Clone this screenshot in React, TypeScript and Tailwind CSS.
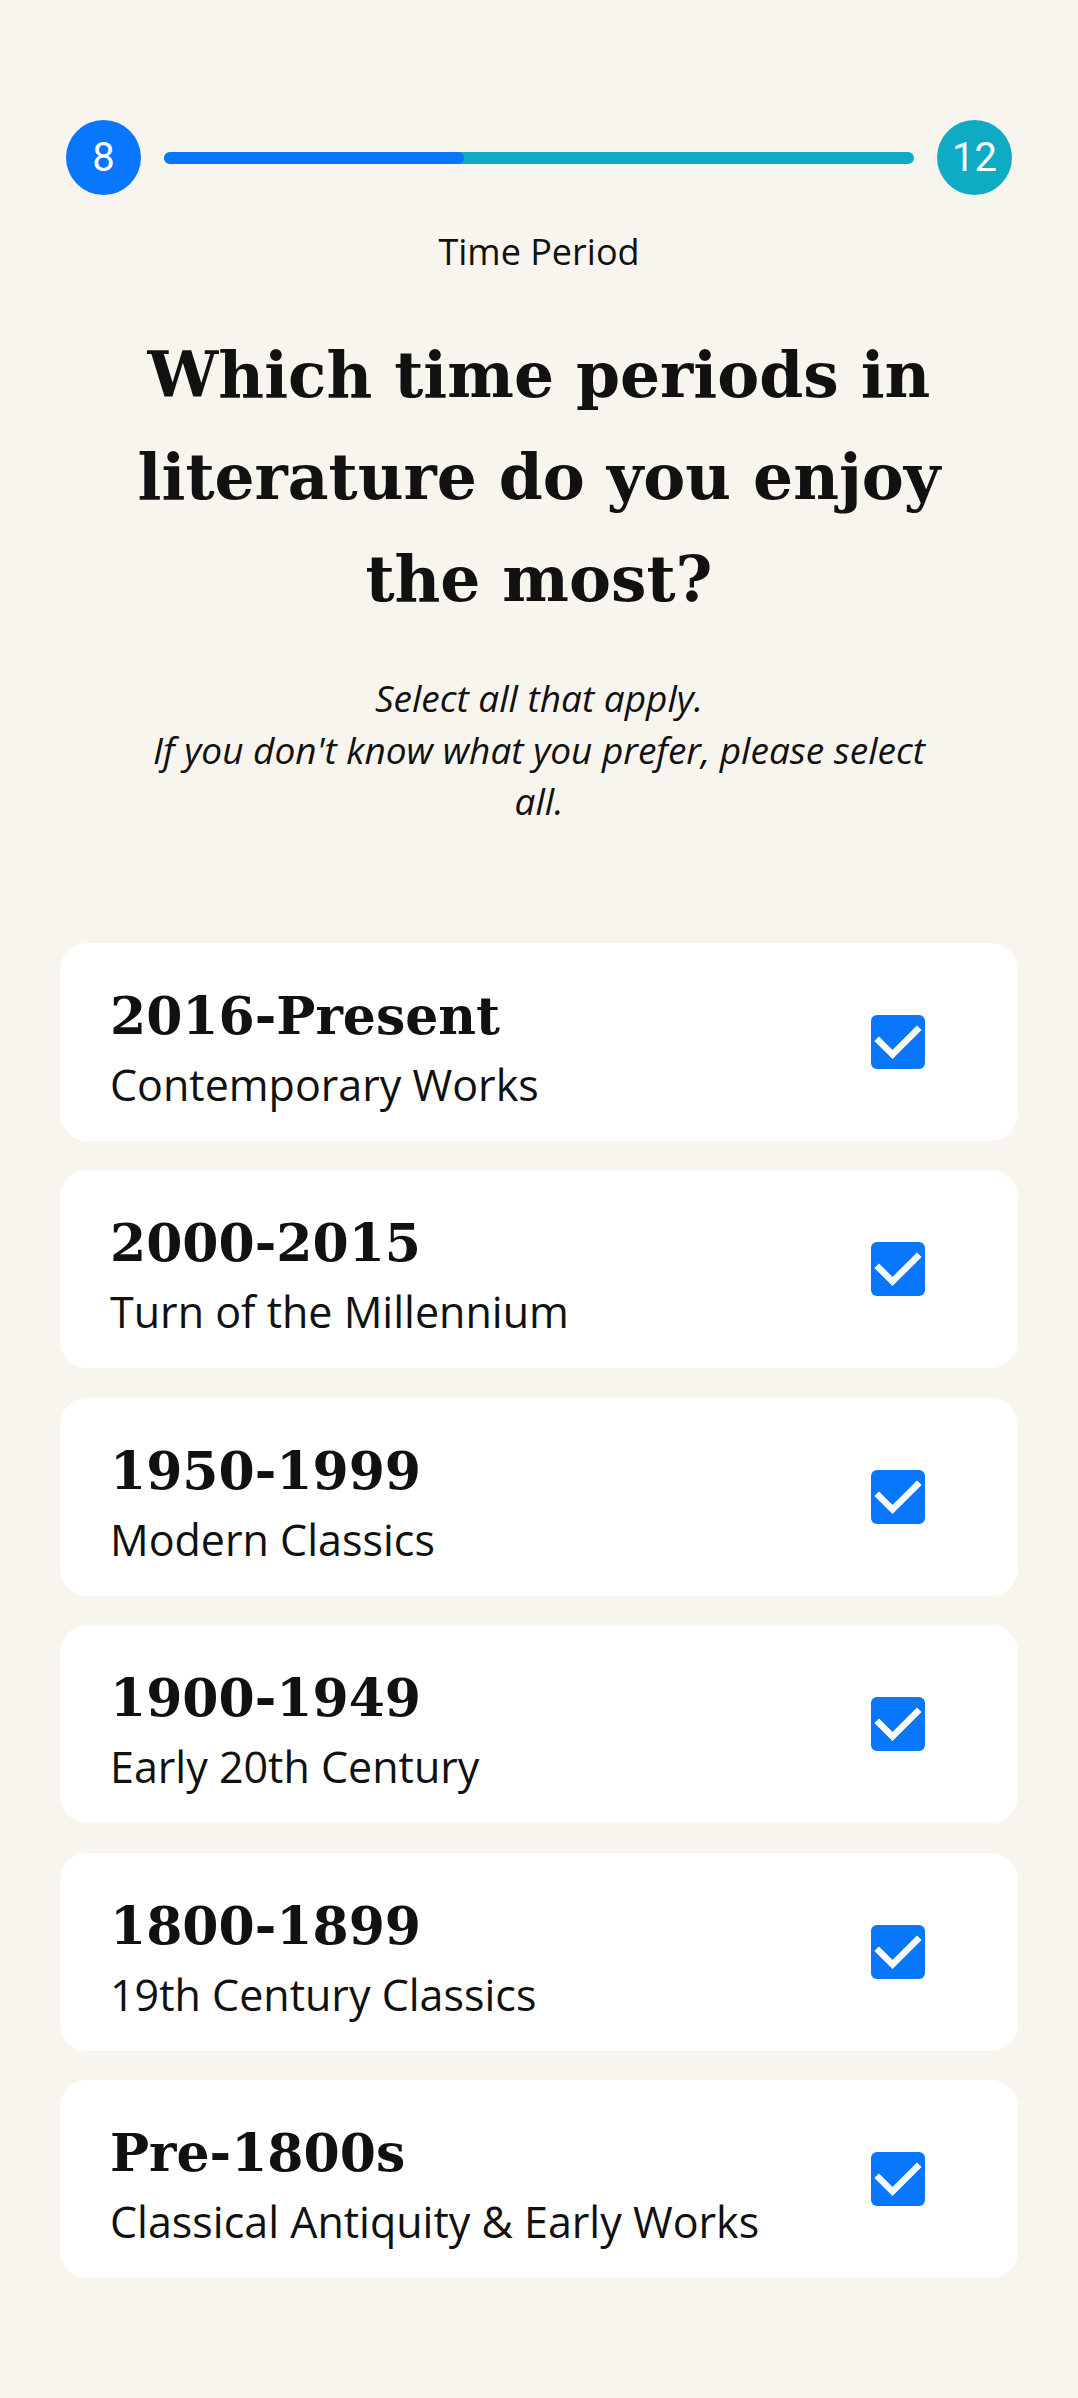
import React from "react";

const items: [string, string][] = [
  ["2016-Present", "Contemporary Works"],
  ["2000-2015", "Turn of the Millennium"],
  ["1950-1999", "Modern Classics"],
  ["1900-1949", "Early 20th Century"],
  ["1800-1899", "19th Century Classics"],
  ["Pre-1800s", "Classical Antiquity & Early Works"],
];

const serif = "font-['DejaVu_Serif',serif]";
const sans = "font-['Open_Sans',sans-serif]";

function Check() {
  return (
    <div className="w-[54px] h-[54px] rounded-[6px] bg-[#0877fb] flex items-center justify-center">
      <svg width="54" height="54" viewBox="0 0 54 54" fill="none">
        <path d="M8 26 L21.5 39.5 L46 15" stroke="#fff" strokeWidth="6.5" strokeLinecap="square" />
      </svg>
    </div>
  );
}

export default function App() {
  return (
    <div className="min-h-[2398px] bg-[#f8f4ee] text-[#111]">
      <div className="flex items-center px-[66px] pt-[120px]">
        <div className="w-[75px] h-[75px] rounded-full bg-[#0877fb] flex items-center justify-center text-white text-[40px] font-['Roboto',sans-serif]">
          8
        </div>
        <div className="flex-1 mx-[23px] h-[12px] rounded-full bg-[#0fabc5] overflow-hidden">
          <div className="h-full w-[40%] rounded-full bg-[#0877fb]" />
        </div>
        <div className="w-[75px] h-[75px] rounded-full bg-[#0fabc5] flex items-center justify-center text-white text-[40px] font-['Roboto',sans-serif]">
          12
        </div>
      </div>

      <div className={`${sans} text-center text-[36px] leading-[50px] mt-[32px]`}>Time Period</div>

      <h1 className={`${serif} font-bold text-center text-[63px] leading-[102px] mx-auto max-w-[820px] mt-[47px]`}>
        Which time periods in literature do you enjoy the most?
      </h1>

      <p className={`${sans} italic text-center text-[37px] leading-[51.5px] mx-auto max-w-[800px] mt-[42px] text-[#111]`}>
        Select all that apply.
        <br />
        If you don't know what you prefer, please select all.
      </p>

      <div className="flex flex-col gap-[29.5px] px-[60px] mt-[116px]">
        {items.map(([t, s]) => (
          <div key={t} className="h-[198px] rounded-[27px] bg-white flex items-center justify-between pl-[50px] pr-[93px]">
            <div className="flex flex-col pt-[14px]">
              <div className={`${serif} font-bold text-[52px] leading-[64px]`}>{t}</div>
              <div className={`${sans} text-[43px] leading-[58px] mt-[8px]`}>{s}</div>
            </div>
            <Check />
          </div>
        ))}
      </div>
    </div>
  );
}
